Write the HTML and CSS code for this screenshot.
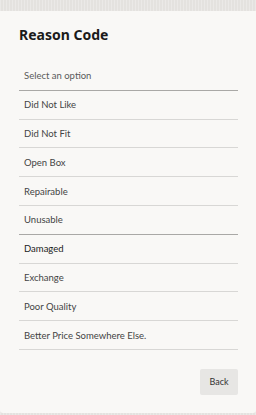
FILE: index.html
```html
<!DOCTYPE html>
<html>
<head>
    <title>Reason Code</title>
    <link rel="stylesheet" href="styles.css">
</head>
<body>

<div class="dialog">
    <h2>Reason Code</h2>
    <ul class="options">
        <li class="placeholder">Select an option</li>
        <li>Did Not Like</li>
        <li>Did Not Fit</li>
        <li>Open Box</li>
        <li>Repairable</li>
        <li class="strong-line">Unusable</li>
        <li class="active">Damaged</li>
        <li>Exchange</li>
        <li>Poor Quality</li>
        <li>Better Price Somewhere Else.</li>
    </ul>
    <div class="actions">
        <button class="back">Back</button>
    </div>
</div>

</body>
</html>
```

FILE: styles.css
```css
body {
    margin: 0;
    background-color: #e4e2df;
    background-image: repeating-linear-gradient(90deg, rgba(255,255,255,0.25) 0 1px, transparent 1px 3px);
    font-family: 'Noto Sans', 'Open Sans', sans-serif;
    height: 415px;
    overflow: hidden;
}
.dialog {
    margin-top: 11px;
    height: 402px;
    background-color: #f9f8f6;
    padding: 14px 18px 0 19px;
    box-sizing: border-box;
    border-radius: 0 0 3px 3px;
}
h2 {
    margin: 0 0 17px 0;
    font-size: 14px;
    line-height: 20px;
    font-weight: 700;
    color: #1b1b1b;
}
.options {
    list-style: none;
    margin: 0;
    padding: 0;
}
.options li {
    height: 28.8px;
    box-sizing: border-box;
    display: flex;
    align-items: center;
    padding-left: 5px;
    font-family: 'Lato', 'Noto Sans', sans-serif;
    font-size: 9.5px;
    color: #444;
    border-bottom: 1px solid #d8d7d5;
}
.options li.placeholder {
    color: #5a5a5a;
    border-bottom-color: #a9a8a6;
}
.options li.strong-line {
    border-bottom-color: #a9a8a6;
}
.options li.active {
    color: #222;
}
.actions {
    display: flex;
    justify-content: flex-end;
    margin-top: 19px;
}
.back {
    width: 38px;
    height: 26px;
    border: none;
    border-radius: 2px;
    background-color: #e7e6e4;
    font-family: 'Lato', 'Noto Sans', sans-serif;
    font-size: 9px;
    color: #333;
    padding: 0;
}
```
